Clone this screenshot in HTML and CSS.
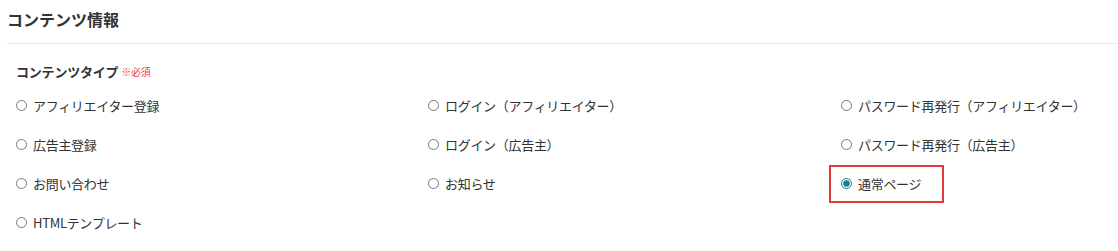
FILE: index.html
```html
<!DOCTYPE html>
<html lang="ja">
<head>
    <meta charset="UTF-8">
    <title>コンテンツ情報</title>
    <link rel="stylesheet" href="styles.css">
</head>
<body>
    <div class="panel">
        <h2 class="panel-title">コンテンツ情報</h2>
        <div class="field">
            <div class="label">コンテンツタイプ <span class="required">※必須</span></div>
            <div class="options">
                <label class="option"><input type="radio" name="type"> アフィリエイター登録</label>
                <label class="option"><input type="radio" name="type"> ログイン（アフィリエイター）</label>
                <label class="option"><input type="radio" name="type"> パスワード再発行（アフィリエイター）</label>
                <label class="option"><input type="radio" name="type"> 広告主登録</label>
                <label class="option"><input type="radio" name="type"> ログイン（広告主）</label>
                <label class="option"><input type="radio" name="type"> パスワード再発行（広告主）</label>
                <label class="option"><input type="radio" name="type"> お問い合わせ</label>
                <label class="option"><input type="radio" name="type"> お知らせ</label>
                <label class="option highlight"><input type="radio" name="type" checked> 通常ページ</label>
                <label class="option"><input type="radio" name="type"> HTMLテンプレート</label>
            </div>
        </div>
    </div>
</body>
</html>
```

FILE: styles.css
```css
* {
    padding: 0;
    margin: 0;
    box-sizing: border-box;
}

body {
    background: #fff;
    color: #333;
    font-family: "Noto Sans CJK JP", "Noto Sans", sans-serif;
    font-size: 13px;
    overflow: hidden;
}

.panel-title {
    font-size: 16px;
    font-weight: bold;
    line-height: 20px;
    padding: 9px 0 14px;
    margin-left: 7px;
    border-bottom: 1px solid #e8e8e8;
}

.field {
    padding: 18px 16px 0;
}

.label {
    font-weight: bold;
    font-size: 13px;
    line-height: 20px;
    letter-spacing: -0.2px;
}

.required {
    color: #f03c3c;
    font-size: 10px;
    font-weight: normal;
    vertical-align: 1px;
}

.options {
    display: grid;
    grid-template-columns: 412px 413px auto;
    grid-auto-rows: 39px;
    margin-top: 4px;
}

.option {
    display: flex;
    align-items: center;
    gap: 6px;
    line-height: 20px;
    letter-spacing: -0.3px;
}

.option input {
    width: 11px;
    height: 11px;
    margin: 0;
    accent-color: #1a7f8e;
}

.highlight {
    justify-self: start;
    align-self: center;
    height: 38px;
    border: 2px solid #e53a3a;
    padding: 0 21px 0 10px;
    margin-left: -12px;
}
```
